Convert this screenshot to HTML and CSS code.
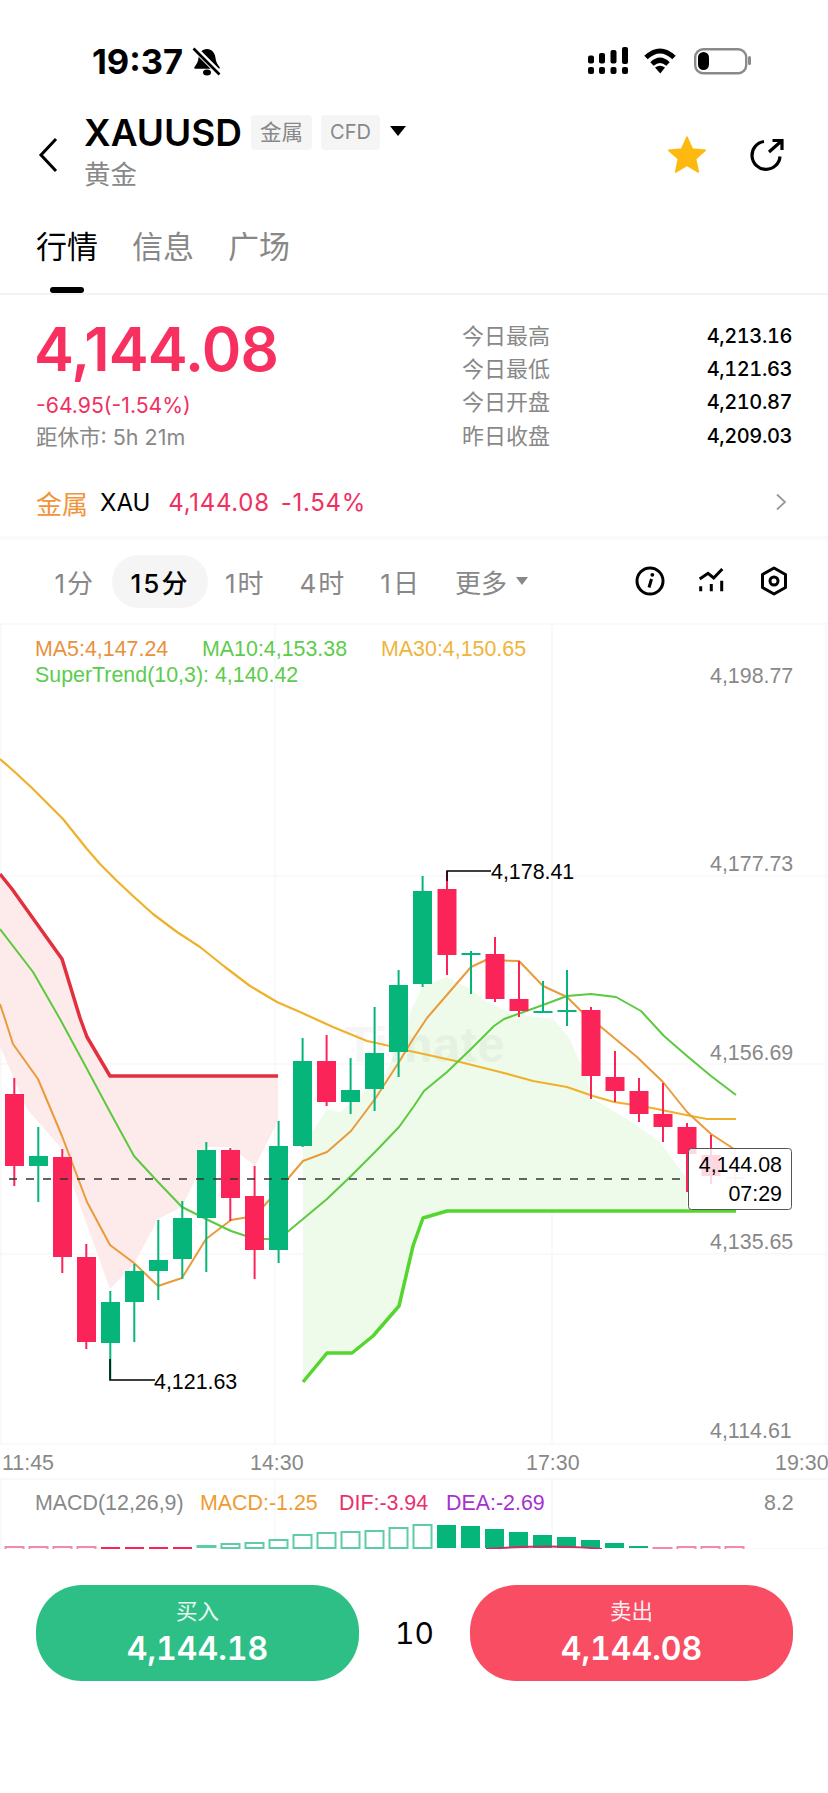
FILE: index.html
```html
<!DOCTYPE html>
<html lang="zh-CN">
<head>
    <meta charset="UTF-8">
    <meta name="viewport" content="width=device-width, initial-scale=1.0">
    <title>XAUUSD</title>
    <link rel="stylesheet" href="styles.css">
</head>
<body>
    <div class="status">
        <span class="clock">19:37</span>
        <svg class="bell" viewBox="0 0 30 30" width="30" height="30">
            <path d="M15 2c-5 0-8 4-8.5 9-.4 4-2 6.5-4 9-.6.8 0 1.8 1 1.8h23c1 0 1.6-1 1-1.8-2-2.5-3.6-5-4-9-.5-5-3.5-9-8.5-9z"/>
            <ellipse cx="15" cy="25.5" rx="4" ry="3"/>
            <path d="M2 1l26 26" stroke="#fff" stroke-width="6"/>
            <path d="M1.5 1.5l26 26" stroke="#000" stroke-width="2.6"/>
        </svg>
        <div class="status-right">
            <svg viewBox="0 0 44 30" width="44" height="30">
                <rect x="2" y="9.5" width="6" height="8" rx="2"/>
                <rect x="13" y="7" width="6" height="10.5" rx="2"/>
                <rect x="24.5" y="4" width="6" height="13.5" rx="2"/>
                <rect x="36" y="1" width="6" height="17" rx="2"/>
                <rect x="2" y="21" width="6" height="7" rx="2"/>
                <rect x="13" y="21" width="6" height="7" rx="2"/>
                <rect x="24.5" y="21" width="6" height="7" rx="2"/>
                <rect x="36" y="21" width="6" height="7" rx="2"/>
            </svg>
            <svg viewBox="0 0 40 30" width="40" height="30">
                <path d="M6 11.5Q20-1.5 34 11.5M12 18Q20 10.5 28 18" fill="none" stroke="#000" stroke-width="5"/>
                <path d="M15 21.5Q20 18 25 21.5L20.3 27.5z"/>
            </svg>
            <svg viewBox="0 0 62 30" width="62" height="30">
                <rect x="5.2" y="3.2" width="51" height="24" rx="8" fill="none" stroke="#8a8a8a" stroke-width="2.4"/>
                <rect x="8" y="6" width="11" height="18" rx="5.5"/>
                <rect x="58" y="10" width="3" height="9" rx="1.5" fill="#8a8a8a"/>
            </svg>
        </div>
    </div>

    <div class="head">
        <svg class="back" viewBox="0 0 20 36" width="20" height="36">
            <path d="M18 2L3 18l15 16" fill="none" stroke="#000" stroke-width="3"/>
        </svg>
        <div class="title">
            <div class="title-row">
                <span class="symbol">XAUUSD</span>
                <span class="tag">金属</span>
                <span class="tag tag-cfd">CFD</span>
                <span class="caret"></span>
            </div>
            <div class="subtitle">黄金</div>
        </div>
        <div class="actions">
            <svg viewBox="0 0 40 38" width="40" height="38">
                <path d="M20 1l5.4 12 13 1.3-9.8 8.7 2.8 13L20 29.3 8.6 36l2.8-13-9.8-8.7 13-1.3z" fill="#fdb90f" stroke="#fdb90f" stroke-width="1.5" stroke-linejoin="round"/>
            </svg>
            <svg viewBox="0 0 36 36" width="36" height="36">
                <path d="M14 4.5A14 14 0 1 0 30 19.5M19 15L32 3.5M22.5 3.5H32V13" fill="none" stroke="#000" stroke-width="3.2"/>
            </svg>
        </div>
    </div>

    <div class="tabs">
        <div class="tab on">行情</div>
        <div class="tab">信息</div>
        <div class="tab">广场</div>
    </div>

    <div class="quote">
        <div class="quote-left">
            <div class="price">4,144.08</div>
            <div class="change">-64.95(-1.54%)</div>
            <div class="close-in">距休市: 5h 21m</div>
        </div>
        <div class="stats">
            <div class="stat"><span>今日最高</span><b>4,213.16</b></div>
            <div class="stat"><span>今日最低</span><b>4,121.63</b></div>
            <div class="stat"><span>今日开盘</span><b>4,210.87</b></div>
            <div class="stat"><span>昨日收盘</span><b>4,209.03</b></div>
        </div>
    </div>

    <div class="sector">
        <span class="sector-name">金属</span>
        <span class="sector-code">XAU</span>
        <span class="sector-price">4,144.08</span>
        <span class="sector-pct">-1.54%</span>
        <svg class="sector-arrow" viewBox="0 0 12 18" width="12" height="18">
            <path d="M2 1.5L10 9l-8 7.5" fill="none" stroke="#999" stroke-width="1.8"/>
        </svg>
    </div>

    <div class="periods">
        <span class="period">1分</span>
        <span class="period on">15分</span>
        <span class="period">1时</span>
        <span class="period">4时</span>
        <span class="period">1日</span>
        <span class="period period-more">更多<i class="more-caret"></i></span>
        <div class="tools">
            <svg viewBox="0 0 30 30" width="30" height="30">
                <circle cx="15" cy="15" r="13" fill="none" stroke="#000" stroke-width="3"/>
                <path d="M16.5 13L14 21.5" fill="none" stroke="#000" stroke-width="3"/>
                <circle cx="17.3" cy="8.8" r="1.9"/>
            </svg>
            <svg viewBox="0 0 28 28" width="28" height="28">
                <path d="M1.7 12L10 6.3l5.7 4.7L24.3 2M2.7 19.3v5M13.3 17v7.3M23.7 13.7v10.6" fill="none" stroke="#000" stroke-width="3"/>
            </svg>
            <svg viewBox="0 0 30 30" width="30" height="30">
                <path d="M15 2l11.5 6.5v13L15 28 3.5 21.5v-13z" fill="none" stroke="#000" stroke-width="3" stroke-linejoin="round"/>
                <circle cx="15" cy="15" r="4" fill="none" stroke="#000" stroke-width="3"/>
            </svg>
        </div>
    </div>

    <!-- user units of the chart are page pixels, so y starts where the chart sits -->
    <svg class="chart" viewBox="0 623 828 927" width="828" height="927">
        <path class="grid" d="M0 625H828M0 877H828M0 1065H828M0 1255H828M0 1445H828M0 1480H828M0 1550H828M1 625V1445M275 625V1445M552 625V1445M826 625V1445M1 1480V1550M275 1480V1550M552 1480V1550"/>

        <!-- SuperTrend bands -->
        <path class="fill-down" d="M0 875L12 890 62 960 80 1019 87 1038 110 1077H278V1122L255 1167 231 1148H206L197 1177 182 1208 158 1220 134 1265 110 1290 73 1187 62 1150 27 1110 0 1047z"/>
        <path class="fill-up" d="M303 1147L327 1110 340 1113 387 1073 413 1007 423 987 447 978 470 990 487 1003 513 1015 553 1020 570 1040 587 1080 593 1100 627 1120 660 1143 687 1180V1212H447L423 1219 413 1247 399 1307 373 1337 352 1354H327L303 1383z"/>
        <text class="mark" x="505" y="1063" text-anchor="end">Timate</text>

        <path class="trend-down" d="M0 875L12 890 62 960 80 1019 87 1038 110 1077H278"/>
        <path class="trend-up" d="M303 1383L327 1354H352L373 1337 399 1307 413 1247 423 1219 447 1212H736"/>

        <path class="ma30" d="M0 760L17 775 33 790 48 805 63 820 75 835 87 850 100 865 117 882 133 897 153 915 177 933 200 948 225 968 250 987 277 1003 300 1013 333 1028 367 1042 390 1047 410 1052 460 1063 500 1073 533 1082 567 1088 593 1097 614 1103 647 1108 691 1117 707 1120H736"/>
        <path class="ma5" d="M0 1005L5 1020 13 1045 38 1080 62 1137 87 1203 110 1246 134 1264 158 1287 182 1279 206 1240 231 1221 255 1217 279 1190 303 1162 327 1153 351 1132 375 1100 399 1063 413 1040 427 1019 471 968 486 961 519 962 543 987 567 998 581 1012 601 1028 637 1058 663 1083 687 1113 711 1135 734 1150"/>
        <path class="ma10" d="M0 930L33 973 60 1020 87 1070 110 1113 134 1157 158 1183 182 1208 206 1220 231 1232 255 1240H279L303 1220 327 1200 351 1177 375 1153 399 1128 414 1107 424 1092 447 1073 471 1050 494 1027 504 1020 543 1006 567 997 591 995 616 998 641 1012 664 1037 687 1057 711 1077 736 1096"/>

        <!-- wicks -->
        <path class="wick-up" d="M38.3 1128V1203M110.3 1292V1381M134.3 1265V1343M158.3 1221V1301M182.3 1202V1280M206.3 1143V1273M278.6 1122V1264M302.6 1039V1148M350.6 1059V1115M374.6 1008V1112M398.6 971V1078M422.6 877V988M471 952V995M543 982V1013M567 971V1027"/>
        <path class="wick-down" d="M14.3 1079V1187M62.3 1150V1274M86.3 1245V1350M230.3 1149V1222M254.6 1167V1280M326.6 1036V1107M447 872V976M495 938V1003M519 962V1018M591 1008V1100M615 1052V1103M639 1079V1123M663 1084V1143M687 1124V1193M711 1136V1185"/>

        <!-- bodies -->
        <g class="body-up">
            <rect x="29" y="1157" width="19" height="10"/>
            <rect x="101" y="1303" width="19" height="41"/>
            <rect x="125" y="1272" width="19" height="31"/>
            <rect x="149" y="1261" width="19" height="11"/>
            <rect x="173" y="1219" width="19" height="41"/>
            <rect x="197" y="1151" width="19" height="68"/>
            <rect x="269" y="1147" width="19" height="104"/>
            <rect x="293" y="1062" width="19" height="85"/>
            <rect x="341" y="1091" width="19" height="12"/>
            <rect x="365" y="1054" width="19" height="36"/>
            <rect x="389" y="986" width="19" height="67"/>
            <rect x="413" y="892" width="19" height="93"/>
            <rect x="461.5" y="954" width="19" height="2"/>
            <rect x="533.5" y="1012" width="19" height="2"/>
            <rect x="557.5" y="1011" width="19" height="2"/>
        </g>
        <g class="body-down">
            <rect x="5" y="1095" width="19" height="72"/>
            <rect x="53" y="1158" width="19" height="100"/>
            <rect x="77" y="1258" width="19" height="85"/>
            <rect x="221" y="1151" width="19" height="48"/>
            <rect x="245" y="1197" width="19" height="54"/>
            <rect x="317" y="1062" width="19" height="41"/>
            <rect x="437.5" y="890" width="19" height="66"/>
            <rect x="485.5" y="955" width="19" height="45"/>
            <rect x="509.5" y="1000" width="19" height="12"/>
            <rect x="581.5" y="1011" width="19" height="66"/>
            <rect x="605.5" y="1078" width="19" height="14"/>
            <rect x="629.5" y="1092" width="19" height="23"/>
            <rect x="653.5" y="1115" width="19" height="13"/>
            <rect x="677.5" y="1128" width="19" height="27"/>
            <rect x="701.5" y="1156" width="19" height="21"/>
        </g>

        <path class="last-line" d="M9 1180H688"/>

        <!-- high and low callouts -->
        <path class="callout" d="M447 882V872H491M110 1360V1381H155"/>
        <text class="label label-dark" x="491" y="880">4,178.41</text>
        <text class="label label-dark" x="154" y="1390">4,121.63</text>

        <!-- last price box -->
        <path class="last-cross" d="M726 1179H744M735 1150V1186"/>
        <rect class="last-box" x="688.5" y="1149.5" width="103" height="61" rx="3"/>
        <text class="label label-dark" x="782" y="1173" text-anchor="end">4,144.08</text>
        <text class="label label-dark" x="782" y="1202" text-anchor="end">07:29</text>

        <!-- legends -->
        <text class="label c-ma5" x="35" y="657">MA5:4,147.24</text>
        <text class="label c-ma10" x="202" y="657">MA10:4,153.38</text>
        <text class="label c-ma30" x="381" y="657">MA30:4,150.65</text>
        <text class="label c-ma10" x="35" y="683">SuperTrend(10,3): 4,140.42</text>

        <!-- price axis -->
        <text class="label c-axis" x="710" y="684">4,198.77</text>
        <text class="label c-axis" x="710" y="872">4,177.73</text>
        <text class="label c-axis" x="710" y="1061">4,156.69</text>
        <text class="label c-axis" x="710" y="1250">4,135.65</text>
        <text class="label c-axis" x="710" y="1439">4,114.61</text>

        <!-- time axis -->
        <text class="label c-axis" x="2" y="1471">11:45</text>
        <text class="label c-axis" x="250" y="1471">14:30</text>
        <text class="label c-axis" x="526" y="1471">17:30</text>
        <text class="label c-axis" x="775" y="1471">19:30</text>

        <!-- MACD panel -->
        <text class="label c-axis" x="35" y="1511">MACD(12,26,9)</text>
        <text class="label c-macd" x="200" y="1511">MACD:-1.25</text>
        <text class="label c-dif" x="339" y="1511">DIF:-3.94</text>
        <text class="label c-dea" x="446" y="1511">DEA:-2.69</text>
        <text class="label c-axis" x="764" y="1511">8.2</text>

        <g class="hist-hollow-down">
            <rect x="5.5" y="1548" width="18" height="4"/>
            <rect x="29.5" y="1548" width="18" height="4"/>
            <rect x="53.5" y="1548" width="18" height="4"/>
            <rect x="77.5" y="1548" width="18" height="4"/>
            <rect x="653.5" y="1549" width="18" height="4"/>
            <rect x="677.5" y="1548" width="18" height="4"/>
            <rect x="701.5" y="1548" width="18" height="4"/>
            <rect x="725.5" y="1548" width="18" height="4"/>
        </g>
        <g class="hist-solid-down">
            <rect x="101" y="1548" width="19" height="2"/>
            <rect x="125" y="1548" width="19" height="2"/>
            <rect x="149" y="1548" width="19" height="2"/>
            <rect x="173" y="1548" width="19" height="2"/>
        </g>
        <g class="hist-hollow-up">
            <rect x="197.5" y="1547" width="18" height="1"/>
            <rect x="221.5" y="1545" width="18" height="4"/>
            <rect x="245.5" y="1544" width="18" height="5"/>
            <rect x="269.5" y="1541" width="18" height="8"/>
            <rect x="293.5" y="1536" width="18" height="13"/>
            <rect x="317.5" y="1534" width="18" height="15"/>
            <rect x="341.5" y="1533" width="18" height="16"/>
            <rect x="365.5" y="1532" width="18" height="17"/>
            <rect x="389.5" y="1529" width="18" height="20"/>
            <rect x="413.5" y="1526" width="18" height="23"/>
        </g>
        <g class="hist-solid-up">
            <rect x="437" y="1526" width="19" height="23"/>
            <rect x="461" y="1527" width="19" height="22"/>
            <rect x="485" y="1530" width="19" height="19"/>
            <rect x="509" y="1533" width="19" height="16"/>
            <rect x="533" y="1536" width="19" height="13"/>
            <rect x="557" y="1538" width="19" height="11"/>
            <rect x="581" y="1541" width="19" height="8"/>
            <rect x="605" y="1544" width="19" height="5"/>
            <rect x="629" y="1547" width="19" height="2"/>
        </g>
        <path class="dif-line" d="M486 1550Q554 1545 602 1550"/>
    </svg>

    <div class="trade">
        <div class="order buy">
            <span class="order-side">买入</span>
            <span class="order-price">4,144.18</span>
        </div>
        <span class="lots">10</span>
        <div class="order sell">
            <span class="order-side">卖出</span>
            <span class="order-price">4,144.08</span>
        </div>
    </div>
</body>
</html>
```

FILE: styles.css
```css
* {
    box-sizing: border-box;
}

body {
    margin: 0;
    width: 828px;
    min-height: 1793px;
    background: #fff;
    color: #000;
    font-family: Inter, "Noto Sans CJK SC", sans-serif;
}

svg {
    display: block;
}

/* status bar */
.status {
    display: flex;
    height: 100px;
    padding: 47px 76px 0 92px;
}

.clock {
    font-size: 34.5px;
    font-weight: 700;
    line-height: 30px;
}

.bell {
    margin: 0 0 0 9px;
}

.status-right {
    display: flex;
    gap: 10px;
    margin: -1px 0 0 auto;
}

/* header */
.head {
    display: flex;
    align-items: center;
    height: 127px;
    padding: 15px 42px 39px 38px;
}

.back {
    margin-right: 26px;
    margin-top: 7px;
}

.title-row {
    display: flex;
    align-items: center;
    height: 35px;
}

.symbol {
    font-size: 37px;
    font-weight: 600;
    margin-right: 9px;
}

.tag {
    height: 35px;
    line-height: 35px;
    padding: 0 9px;
    margin-right: 9px;
    border-radius: 4px;
    background: #f5f5f5;
    color: #888;
    font-size: 21.5px;
}

.tag-cfd {
    font-size: 20px;
}

.caret {
    width: 0;
    height: 0;
    margin: 0 0 2px 1px;
    border-left: 8px solid transparent;
    border-right: 8px solid transparent;
    border-top: 10px solid #000;
}

.subtitle {
    margin-top: 10px;
    color: #888;
    font-size: 26.5px;
    line-height: 29px;
}

.actions {
    display: flex;
    align-items: center;
    gap: 43px;
    margin: 7px 0 0 auto;
}

/* tabs */
.tabs {
    display: flex;
    gap: 34px;
    padding: 0 36px;
    height: 68px;
    border-bottom: 2px solid #f3f3f3;
}

.tab {
    color: #888;
    font-size: 31px;
    line-height: 40px;
}

.tab.on {
    color: #000;
}

.tab.on::after {
    content: "";
    display: block;
    width: 34px;
    height: 6px;
    margin: 20px auto 0;
    border-radius: 3px;
    background: #000;
}

/* price block */
.quote {
    display: flex;
    justify-content: space-between;
    height: 175px;
    padding: 24px 36px 0;
}

.price {
    margin-left: -2px;
    color: #f8305f;
    font-size: 60px;
    font-weight: 600;
    line-height: 60px;
    letter-spacing: -0.8px;
}

.change {
    margin-top: 13px;
    color: #f0305f;
    font-size: 21.2px;
    line-height: 26px;
}

.close-in {
    margin-top: 6px;
    color: #888;
    font-size: 21.5px;
    line-height: 26px;
}

.stats {
    width: 330px;
}

.stat {
    display: flex;
    justify-content: space-between;
    align-items: center;
    height: 33.3px;
}

.stat span {
    margin-top: -4px;
    color: #888;
    font-size: 22px;
}

.stat b {
    font-size: 20px;
    font-weight: 500;
    font-variant-numeric: tabular-nums;
    letter-spacing: -0.4px;
}

/* sector row */
.sector {
    display: flex;
    align-items: center;
    height: 70px;
    padding: 0 41px 2px 36px;
    border-bottom: 4px solid #fafafa;
}

.sector-name {
    margin-right: 12px;
    color: #f0943a;
    font-size: 26px;
}

.sector-code {
    margin-right: 18px;
    font-size: 24px;
}

.sector-price,
.sector-pct {
    color: #f0305f;
    font-size: 24px;
    letter-spacing: 0.7px;
}

.sector-pct {
    margin-left: 11px;
}

.sector-arrow {
    margin-left: auto;
}

/* period switcher */
.periods {
    display: flex;
    align-items: center;
    height: 82px;
    padding: 0 39px 0 37.5px;
}

.period {
    display: flex;
    align-items: center;
    height: 53px;
    padding: 0 17px;
    border-radius: 27px;
    color: #888;
    font-size: 26px;
    letter-spacing: 2px;
}

.period.on {
    padding: 0 18.5px;
    background: #f5f5f5;
    color: #000;
    font-weight: 500;
}

.period-more {
    letter-spacing: 0;
}

.more-caret {
    width: 0;
    height: 0;
    margin-left: 9px;
    border-left: 6px solid transparent;
    border-right: 6px solid transparent;
    border-top: 8px solid #888;
}

.tools {
    display: flex;
    align-items: center;
    gap: 33px;
    margin-left: auto;
}

/* chart */
.grid {
    fill: none;
    stroke: #f7f7f7;
    stroke-width: 1.5;
}

.fill-down {
    fill: #fdeaea;
}

.fill-up {
    fill: #eefbea;
}

.mark {
    fill: #000;
    opacity: 0.03;
    font-family: "Liberation Sans", sans-serif;
    font-size: 50px;
    font-weight: 700;
}

.trend-down,
.trend-up,
.ma5,
.ma10,
.ma30 {
    fill: none;
    stroke-linejoin: round;
}

.trend-down {
    stroke: #e2303f;
    stroke-width: 3.5;
}

.trend-up {
    stroke: #55d62f;
    stroke-width: 3.5;
}

.ma5 {
    stroke: #ea9a3a;
    stroke-width: 2;
}

.ma10 {
    stroke: #5cc93f;
    stroke-width: 2;
}

.ma30 {
    stroke: #efb02a;
    stroke-width: 2.2;
}

.wick-up {
    stroke: #06b57a;
    stroke-width: 2;
}

.wick-down {
    stroke: #fb2459;
    stroke-width: 2;
}

.body-up {
    fill: #06b57a;
}

.body-down {
    fill: #fb2459;
}

.last-line {
    stroke: #333;
    stroke-width: 1.5;
    stroke-dasharray: 8 9;
}

.callout {
    fill: none;
    stroke: #000;
    stroke-width: 1.5;
}

.last-cross {
    fill: none;
    stroke: #e8b8c4;
    stroke-width: 1.5;
}

.last-box {
    fill: #fff;
    fill-opacity: 0.82;
    stroke: #555;
    stroke-width: 1;
}

.label {
    font-family: "Liberation Sans", sans-serif;
    font-size: 21.4px;
}

.label-dark {
    fill: #000;
}

.c-ma5 {
    fill: #e8913e;
}

.c-ma10 {
    fill: #5ccc4c;
}

.c-ma30 {
    fill: #eeb43b;
}

.c-axis {
    fill: #888;
}

.c-macd {
    fill: #f09a30;
}

.c-dif {
    fill: #e8306a;
}

.c-dea {
    fill: #a830d0;
}

.hist-hollow-down {
    fill: none;
    stroke: #f08aa6;
    stroke-width: 2;
}

.hist-solid-down {
    fill: #fb2459;
}

.hist-hollow-up {
    fill: #fff;
    stroke: #5fcca6;
    stroke-width: 2;
}

.hist-solid-up {
    fill: #06b57a;
}

.dif-line {
    fill: none;
    stroke: #c8306a;
    stroke-width: 2;
}

/* buy and sell buttons */
.trade {
    display: flex;
    align-items: center;
    justify-content: space-between;
    padding: 36px 35px 0 36px;
}

.order {
    display: flex;
    flex-direction: column;
    align-items: center;
    width: 323px;
    height: 96px;
    padding-top: 11px;
    border-radius: 46px;
    color: #fff;
}

.buy {
    background: #2dbf85;
}

.sell {
    background: #f94d63;
}

.order-side {
    font-size: 21.5px;
    line-height: 30px;
    opacity: 0.9;
}

.order-price {
    margin-top: 3px;
    font-size: 32px;
    font-weight: 600;
    font-variant-numeric: tabular-nums;
    line-height: 40px;
}

.lots {
    font-size: 30px;
    font-variant-numeric: tabular-nums;
}
```
